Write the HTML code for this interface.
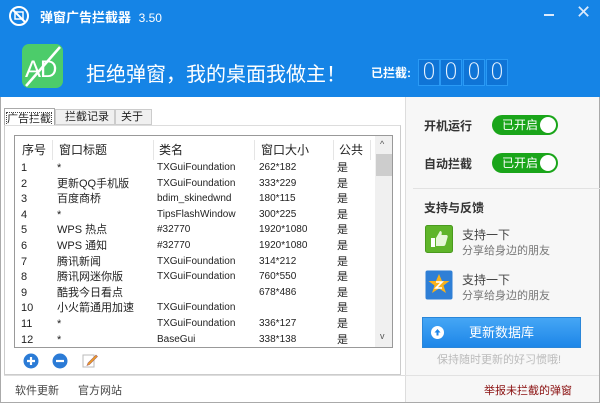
<!DOCTYPE html>
<html><head><meta charset="utf-8"><style>
*{margin:0;padding:0;box-sizing:border-box;white-space:nowrap}
body{width:600px;height:403px;overflow:hidden;font-family:"Liberation Sans","Noto Sans CJK SC",sans-serif;font-size:12px;color:#222;background:#fff;position:relative}
.a{position:absolute}
#hdr{left:0;top:0;width:600px;height:97px;background:#1584e6}
.dig{top:59px;width:22px;height:27px;border:1px solid #2a9af5;background:#0f74d6;color:#e8f3ff;font-size:22px;text-align:center;line-height:25px;font-family:"DejaVu Sans",sans-serif;font-weight:200}
.row{position:absolute;left:0;width:360px;height:16px;font-size:11px;line-height:16px}
.row span{position:absolute}
.c1{left:22px}.c2{left:58px}.c3{left:158px;font-size:10px}.c4{left:260px;font-size:10px}.c5{left:338px}
.tog{width:66px;height:20px;border-radius:10px;background:#1aa51a;color:#fff;font-size:12px;line-height:20px;padding-left:10px}
.tog:after{content:"";position:absolute;right:2px;top:2px;width:16px;height:16px;border-radius:50%;background:#fff}
</style></head><body>
<div id="hdr" class="a"></div>
<svg class="a" style="left:8px;top:5px" width="22" height="22" viewBox="0 0 22 22"><circle cx="11" cy="11" r="9" fill="none" stroke="#fff" stroke-width="2"/><rect x="7" y="7" width="8" height="7" fill="none" stroke="#fff" stroke-width="1.5"/><line x1="4.5" y1="4.5" x2="17.5" y2="17.5" stroke="#fff" stroke-width="2"/></svg>
<div class="a" style="left:40px;top:7px;color:#fff;font-size:13px;font-weight:bold">弹窗广告拦截器 <span style="font-weight:normal;font-size:12px;margin-left:4px">3.50</span></div>
<div class="a" style="left:544px;top:14px;width:10px;height:2px;background:#dbeafc"></div>
<div class="a" style="left:576px;top:2px;color:#dbeafc;font-size:18px">✕</div>
<svg class="a" style="left:22px;top:44px" width="41" height="44" viewBox="0 0 41 44"><rect width="41" height="44" rx="7" fill="#4ccc6a"/><text x="3" y="33" font-family="Liberation Sans" font-size="24" fill="#fff" letter-spacing="-1">AD</text><line x1="38" y1="3" x2="4" y2="42" stroke="#fff" stroke-width="2.5"/></svg>
<div class="a" style="left:86px;top:58px;color:#fff;font-size:20px">拒绝弹窗，我的桌面我做主！</div>
<div class="a" style="left:371px;top:64px;color:#fff;font-size:12px;font-weight:bold">已拦截:</div>
<div class="a dig" style="left:418px">0</div><div class="a dig" style="left:440px">0</div><div class="a dig" style="left:463px">0</div><div class="a dig" style="left:486px">0</div>
<div class="a" style="left:0;top:97px;width:600px;height:306px;border:1px solid #aaa;border-top:none"></div>
<div class="a" style="left:4px;top:108px;width:51px;height:18px;border:1px solid #aaa;border-bottom:none;background:#fff;font-size:11px;padding:1px 2px"><span style="outline:1px dotted #444">广告拦截</span></div>
<div class="a" style="left:55px;top:109px;width:60px;height:16px;border:1px solid #ccc;background:#f0f0f0;font-size:11px;padding-left:9px;line-height:14px">拦截记录</div>
<div class="a" style="left:115px;top:109px;width:37px;height:16px;border:1px solid #ccc;background:#f0f0f0;font-size:11px;padding-left:5px;line-height:14px">关于</div>
<div class="a" style="left:4px;top:125px;width:397px;height:250px;border:1px solid #ccc;border-top:1px solid #ddd"></div>
<div class="a" style="left:14px;top:135px;width:379px;height:213px;border:1px solid #999;background:#fff;overflow:hidden">
 <div class="row" style="top:5px;height:19px;font-size:12px;line-height:19px"><span style="left:7px">序号</span><span style="left:44px">窗口标题</span><span style="left:144px">类名</span><span style="left:246px">窗口大小</span><span style="left:324px">公共</span></div>
 <div class="a" style="left:37px;top:4px;width:1px;height:20px;background:#e5e5e5"></div><div class="a" style="left:138px;top:4px;width:1px;height:20px;background:#e5e5e5"></div><div class="a" style="left:239px;top:4px;width:1px;height:20px;background:#e5e5e5"></div><div class="a" style="left:318px;top:4px;width:1px;height:20px;background:#e5e5e5"></div><div class="a" style="left:355px;top:4px;width:1px;height:20px;background:#e5e5e5"></div>
 <div class="a" style="left:360px;top:0;width:18px;height:212px;background:#f0f0f0"><div class="a" style="left:5px;top:3px;font-size:9px;color:#555">^</div><div class="a" style="left:1px;top:18px;width:16px;height:22px;background:#cdcdcd"></div><div class="a" style="left:5px;top:195px;font-size:9px;color:#555">v</div></div>
</div>
<div class="a" style="left:-1px;top:160px">
<div class="row" style="top:0"><span class="c1">1</span><span class="c2">*</span><span class="c3">TXGuiFoundation</span><span class="c4">262*182</span><span class="c5">是</span></div>
<div class="row" style="top:15.6px"><span class="c1">2</span><span class="c2">更新QQ手机版</span><span class="c3">TXGuiFoundation</span><span class="c4">333*229</span><span class="c5">是</span></div>
<div class="row" style="top:31.2px"><span class="c1">3</span><span class="c2">百度商桥</span><span class="c3">bdim_skinedwnd</span><span class="c4">180*115</span><span class="c5">是</span></div>
<div class="row" style="top:46.8px"><span class="c1">4</span><span class="c2">*</span><span class="c3">TipsFlashWindow</span><span class="c4">300*225</span><span class="c5">是</span></div>
<div class="row" style="top:62.4px"><span class="c1">5</span><span class="c2">WPS 热点</span><span class="c3">#32770</span><span class="c4">1920*1080</span><span class="c5">是</span></div>
<div class="row" style="top:78px"><span class="c1">6</span><span class="c2">WPS 通知</span><span class="c3">#32770</span><span class="c4">1920*1080</span><span class="c5">是</span></div>
<div class="row" style="top:93.6px"><span class="c1">7</span><span class="c2">腾讯新闻</span><span class="c3">TXGuiFoundation</span><span class="c4">314*212</span><span class="c5">是</span></div>
<div class="row" style="top:109.2px"><span class="c1">8</span><span class="c2">腾讯网迷你版</span><span class="c3">TXGuiFoundation</span><span class="c4">760*550</span><span class="c5">是</span></div>
<div class="row" style="top:124.8px"><span class="c1">9</span><span class="c2">酷我今日看点</span><span class="c4">678*486</span><span class="c5">是</span></div>
<div class="row" style="top:140.4px"><span class="c1">10</span><span class="c2">小火箭通用加速</span><span class="c3">TXGuiFoundation</span><span class="c5">是</span></div>
<div class="row" style="top:156px"><span class="c1">11</span><span class="c2">*</span><span class="c3">TXGuiFoundation</span><span class="c4">336*127</span><span class="c5">是</span></div>
<div class="row" style="top:171.6px"><span class="c1">12</span><span class="c2">*</span><span class="c3">BaseGui</span><span class="c4">338*138</span><span class="c5">是</span></div>
</div>
<svg class="a" style="left:23px;top:353px" width="16" height="16"><circle cx="8" cy="8" r="7.5" fill="#2b7bd6"/><path d="M4 8h8M8 4v8" stroke="#fff" stroke-width="2.2"/></svg>
<svg class="a" style="left:52px;top:353px" width="16" height="16"><circle cx="8" cy="8" r="7.5" fill="#2b7bd6"/><path d="M4 8h8" stroke="#fff" stroke-width="2.2"/></svg>
<svg class="a" style="left:82px;top:352px" width="16" height="16"><rect x="1" y="3" width="11" height="12" fill="#fff" stroke="#bbb"/><path d="M6 11l8-8 1.5 1.5-8 8-2.5 1z" fill="#f0a020" stroke="#a66" stroke-width=".6"/></svg>
<div class="a" style="left:4px;top:375px;width:401px;height:1px;background:#ddd"></div>
<div class="a" style="left:15px;top:382px;color:#444;font-size:11px">软件更新</div>
<div class="a" style="left:78px;top:382px;color:#444;font-size:11px">官方网站</div>
<div class="a" style="left:405px;top:97px;width:194px;height:305px;background:#f7f7f7;border-left:1px solid #ddd"></div>
<div class="a" style="left:424px;top:117px;font-size:12px;color:#333;font-weight:bold">开机运行</div>
<div class="a tog" style="left:492px;top:115px">已开启</div>
<div class="a" style="left:424px;top:155px;font-size:12px;color:#333;font-weight:bold">自动拦截</div>
<div class="a tog" style="left:492px;top:153px">已开启</div>
<div class="a" style="left:413px;top:188px;width:187px;height:1px;background:#e2e2e2"></div>
<div class="a" style="left:424px;top:199px;font-size:12px;color:#333;font-weight:bold">支持与反馈</div>
<svg class="a" style="left:425px;top:225px" width="28" height="28"><rect x=".5" y=".5" width="27" height="27" rx="2" fill="#5fb52a" stroke="#4a9a1e"/><rect x="6" y="13" width="4" height="9" fill="#fff"/><path d="M11 13l4-7c2 0 2 2 1.5 4H21c1.5 0 2 1 1.5 2.5l-2 7c-.3 1-1 1.5-2 1.5H11z" fill="#e6f7d8"/></svg>
<svg class="a" style="left:425px;top:270px" width="28" height="30"><rect x=".5" y=".5" width="27" height="29" rx="2" fill="#2f7fd6"/><path d="M14 4l3 7h7.5l-6 4.5 2.5 7.5-7-4.5-7 4.5 2.5-7.5-6-4.5H11z" fill="#f9b21a"/><path d="M11 12h6l-6 6h6" stroke="#fff" stroke-width="1.6" fill="none"/></svg>
<div class="a" style="left:462px;top:226px;font-size:12px;color:#444">支持一下</div>
<div class="a" style="left:462px;top:242px;font-size:11px;color:#777">分享给身边的朋友</div>
<div class="a" style="left:462px;top:271px;font-size:12px;color:#444">支持一下</div>
<div class="a" style="left:462px;top:287px;font-size:11px;color:#777">分享给身边的朋友</div>
<div class="a" style="left:422px;top:317px;width:159px;height:31px;background:linear-gradient(#45a6f5,#1d86e8);border:1px solid #2a86d8;color:#fff;font-size:13px;text-align:center;line-height:29px">更新数据库</div>
<svg class="a" style="left:431px;top:326px" width="13" height="13"><circle cx="6.5" cy="6.5" r="6.5" fill="#fff"/><path d="M6.5 3l-3 3.5h2v3h2v-3h2z" fill="#1d86e8"/></svg>
<div class="a" style="left:437px;top:351px;font-size:11px;color:#bbb">保持随时更新的好习惯哦!</div>
<div class="a" style="left:405px;top:375px;width:194px;height:1px;background:#e2e2e2"></div>
<div class="a" style="left:484px;top:382px;font-size:11px;color:#8a1010">举报未拦截的弹窗</div>
</body></html>
